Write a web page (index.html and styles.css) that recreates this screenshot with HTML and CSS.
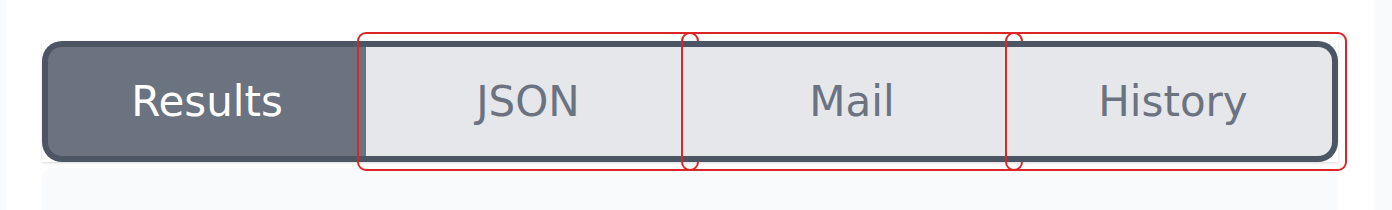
FILE: index.html
```html
<!DOCTYPE html>
<html lang="en">

<head>
    <meta charset="UTF-8">
    <meta name="viewport" content="width=device-width, initial-scale=1.0">
    <title>Tabs</title>
    <link rel="stylesheet" href="styles.css">
</head>

<body>
    <div class="page">
        <div class="tabs-wrap">
            <div class="tabs">
                <div class="tab active">Results</div>
                <div class="tab marked">JSON</div>
                <div class="tab marked">Mail</div>
                <div class="tab marked">History</div>
            </div>
        </div>
        <div class="panel"></div>
    </div>
</body>

</html>
```

FILE: styles.css
```css
body {
    margin: 0;
    background-color: #f9fafb;
    font-family: "DejaVu Sans", Verdana, sans-serif;
}

.page {
    height: 210px;
    margin: 0 18px 0 6px;
    padding: 41px 36px 0;
    box-sizing: border-box;
    background: white;
    overflow: hidden;
}

.tabs-wrap {
    background: white;
    box-shadow: 0 1px 3px rgba(0, 0, 0, 0.1), 0 1px 2px rgba(0, 0, 0, 0.06);
}

.tabs {
    display: grid;
    grid-template-columns: repeat(4, 1fr);
    height: 121px;
}

.tab {
    position: relative;
    display: flex;
    align-items: center;
    justify-content: center;
    background-color: #e5e7eb;
    color: #6b7280;
    border-top: 6px solid #4b5563;
    border-bottom: 6px solid #4b5563;
    font-size: 42px;
}

.tab:first-child {
    border-left: 6px solid #4b5563;
    border-radius: 20px 0 0 20px;
}

.tab:last-child {
    border-right: 6px solid #4b5563;
    border-radius: 0 20px 20px 0;
}

.tab.active {
    background-color: #6b7280;
    color: white;
}

/* red highlight boxes drawn over the tabs */
.tab.marked::after {
    content: "";
    position: absolute;
    top: -15px;
    bottom: -15px;
    left: -9px;
    right: -9px;
    border: 2px solid #dc2626;
    border-radius: 9px;
}

.tab.marked:first-child::after,
.tab.marked:last-child::after {
    right: -15px;
}

.panel {
    margin-top: 6px;
    height: 60px;
    background-color: #f9fafb;
    border-radius: 10px 10px 0 0;
}
```
